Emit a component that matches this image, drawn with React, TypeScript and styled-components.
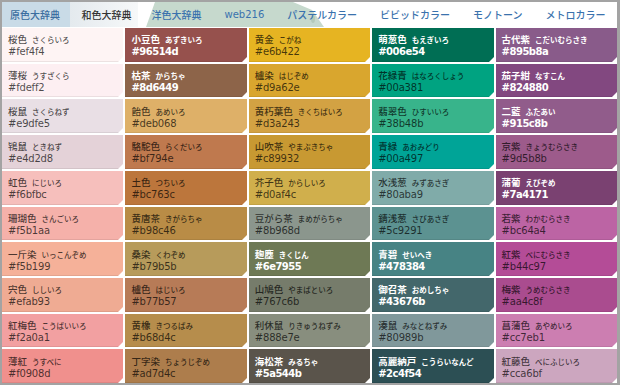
import styled, { createGlobalStyle } from "styled-components";

type Swatch = [string, string, string, boolean];

// each column top to bottom: name, reading, hex, white text?
const columns: Swatch[][] = [
  [
    ["桜色", "さくらいろ", "#fef4f4", false],
    ["薄桜", "うすざくら", "#fdeff2", false],
    ["桜鼠", "さくらねず", "#e9dfe5", false],
    ["鴇鼠", "ときねず", "#e4d2d8", false],
    ["虹色", "にじいろ", "#f6bfbc", false],
    ["珊瑚色", "さんごいろ", "#f5b1aa", false],
    ["一斤染", "いっこんぞめ", "#f5b199", false],
    ["宍色", "ししいろ", "#efab93", false],
    ["紅梅色", "こうばいいろ", "#f2a0a1", false],
    ["薄紅", "うすべに", "#f0908d", false],
  ],
  [
    ["小豆色", "あずきいろ", "#96514d", true],
    ["枯茶", "からちゃ", "#8d6449", true],
    ["飴色", "あめいろ", "#deb068", false],
    ["駱駝色", "らくだいろ", "#bf794e", false],
    ["土色", "つちいろ", "#bc763c", false],
    ["黄唐茶", "きがらちゃ", "#b98c46", false],
    ["桑染", "くわぞめ", "#b79b5b", false],
    ["櫨色", "はじいろ", "#b77b57", false],
    ["黄橡", "きつるばみ", "#b68d4c", false],
    ["丁字染", "ちょうじぞめ", "#ad7d4c", false],
  ],
  [
    ["黄金", "こがね", "#e6b422", false],
    ["櫨染", "はじぞめ", "#d9a62e", false],
    ["黄朽葉色", "きくちばいろ", "#d3a243", false],
    ["山吹茶", "やまぶきちゃ", "#c89932", false],
    ["芥子色", "からしいろ", "#d0af4c", false],
    ["豆がら茶", "まめがらちゃ", "#8b968d", false],
    ["麹塵", "きくじん", "#6e7955", true],
    ["山鳩色", "やまばといろ", "#767c6b", false],
    ["利休鼠", "りきゅうねずみ", "#888e7e", false],
    ["海松茶", "みるちゃ", "#5a544b", true],
  ],
  [
    ["萌葱色", "もえぎいろ", "#006e54", true],
    ["花緑青", "はなろくしょう", "#00a381", false],
    ["翡翠色", "ひすいいろ", "#38b48b", false],
    ["青緑", "あおみどり", "#00a497", false],
    ["水浅葱", "みずあさぎ", "#80aba9", false],
    ["錆浅葱", "さびあさぎ", "#5c9291", false],
    ["青碧", "せいへき", "#478384", true],
    ["御召茶", "おめしちゃ", "#43676b", true],
    ["湊鼠", "みなとねずみ", "#80989b", false],
    ["高麗納戸", "こうらいなんど", "#2c4f54", true],
  ],
  [
    ["古代紫", "こだいむらさき", "#895b8a", true],
    ["茄子紺", "なすこん", "#824880", true],
    ["二藍", "ふたあい", "#915c8b", true],
    ["京紫", "きょうむらさき", "#9d5b8b", false],
    ["蒲葡", "えびぞめ", "#7a4171", true],
    ["若紫", "わかむらさき", "#bc64a4", false],
    ["紅紫", "べにむらさき", "#b44c97", false],
    ["梅紫", "うめむらさき", "#aa4c8f", false],
    ["菖蒲色", "あやめいろ", "#cc7eb1", false],
    ["紅藤色", "べにふじいろ", "#cca6bf", false],
  ],
];

const tabs = ["洋色大辞典", "web216", "パステルカラー", "ビビッドカラー", "モノトーン", "メトロカラー"];

const GlobalStyle = createGlobalStyle`
  html, body {
    margin: 0;
    padding: 0;
    background: #a3a3a3;
  }
  body {
    font-family: "DejaVu Sans", "Noto Sans CJK JP", sans-serif;
  }
`;

const Frame = styled.div`
  width: 615px;
  height: 381px;
  margin: 2px 0 0 2px;
  background: #ffffff;
  display: flex;
  flex-direction: column;
  gap: 1px;
`;

const TabBar = styled.nav`
  position: relative;
  height: 25px;
  display: flex;
  align-items: stretch;
  flex-shrink: 0;
`;

const Deco = styled.svg`
  position: absolute;
  left: 0;
  top: 0;
  z-index: 0;
`;

const Tab = styled.div<{ kind?: "origin" | "active" }>`
  position: relative;
  z-index: 1;
  display: flex;
  align-items: center;
  font-size: 10px;
  font-weight: 500;
  white-space: nowrap;
  padding: 0 11.5px;
  color: #3a72ad;
  ${({ kind }) =>
    kind === "origin" &&
    `
    width: 70px;
    box-sizing: border-box;
    padding: 0 0 0 8px;
    background: #c9dbe7;
    color: #3b6d9f;
  `}
  ${({ kind }) =>
    kind === "active" &&
    `
    width: 69px;
    box-sizing: border-box;
    padding: 0 0 0 11px;
    margin-right: 2px;
    background: linear-gradient(to right, #e4eaee, #f6f8f9);
    color: #333333;
  `}
`;

const Grid = styled.div`
  flex: 1;
  display: grid;
  grid-template-columns: repeat(5, 1fr);
  grid-template-rows: repeat(10, 1fr);
  grid-auto-flow: column;
  gap: 2px;
`;

const Cell = styled.div<{ bg: string; light: boolean }>`
  position: relative;
  background: ${({ bg }) => bg};
  box-shadow: inset 0 -1px 0 rgba(0, 0, 0, 0.07);
  display: flex;
  flex-direction: column;
  justify-content: center;
  padding: 2px 0 0 6px;
  color: ${({ light }) => (light ? "#ffffff" : "rgba(0, 0, 0, 0.7)")};
  font-weight: ${({ light }) => (light ? 700 : 500)};

  &::after {
    content: "";
    position: absolute;
    right: 0;
    bottom: 0;
    width: 0;
    height: 0;
    border-style: solid;
    border-width: 0 0 5px 5px;
    border-color: transparent transparent #ffffff transparent;
  }
`;

const Name = styled.div`
  font-size: 9.5px;
  line-height: 11px;
  white-space: nowrap;
`;

const Reading = styled.span`
  font-size: 7.5px;
  margin-left: 5px;
`;

const Hex = styled.div<{ light: boolean }>`
  font-size: 10px;
  line-height: 11px;
  letter-spacing: ${({ light }) => (light ? "-0.5px" : "-0.2px")};
`;

export default function App() {
  return (
    <>
      <GlobalStyle />
      <Frame>
        <TabBar>
          <Deco width="615" height="25" viewBox="0 0 615 25">
            <polygon points="153,0 144,25 322,25 310,8 291,0" fill="#c6d9cd" />
            <ellipse cx="311" cy="17" rx="2" ry="4" fill="#b3c9b9" />
          </Deco>
          <Tab kind="origin">原色大辞典</Tab>
          <Tab kind="active">和色大辞典</Tab>
          {tabs.map((t) => (
            <Tab key={t}>{t}</Tab>
          ))}
        </TabBar>
        <Grid>
          {columns.flat().map(([name, reading, hex, light]) => (
            <Cell key={hex} bg={hex} light={light}>
              <Name>
                {name}
                <Reading>{reading}</Reading>
              </Name>
              <Hex light={light}>{hex}</Hex>
            </Cell>
          ))}
        </Grid>
      </Frame>
    </>
  );
}
